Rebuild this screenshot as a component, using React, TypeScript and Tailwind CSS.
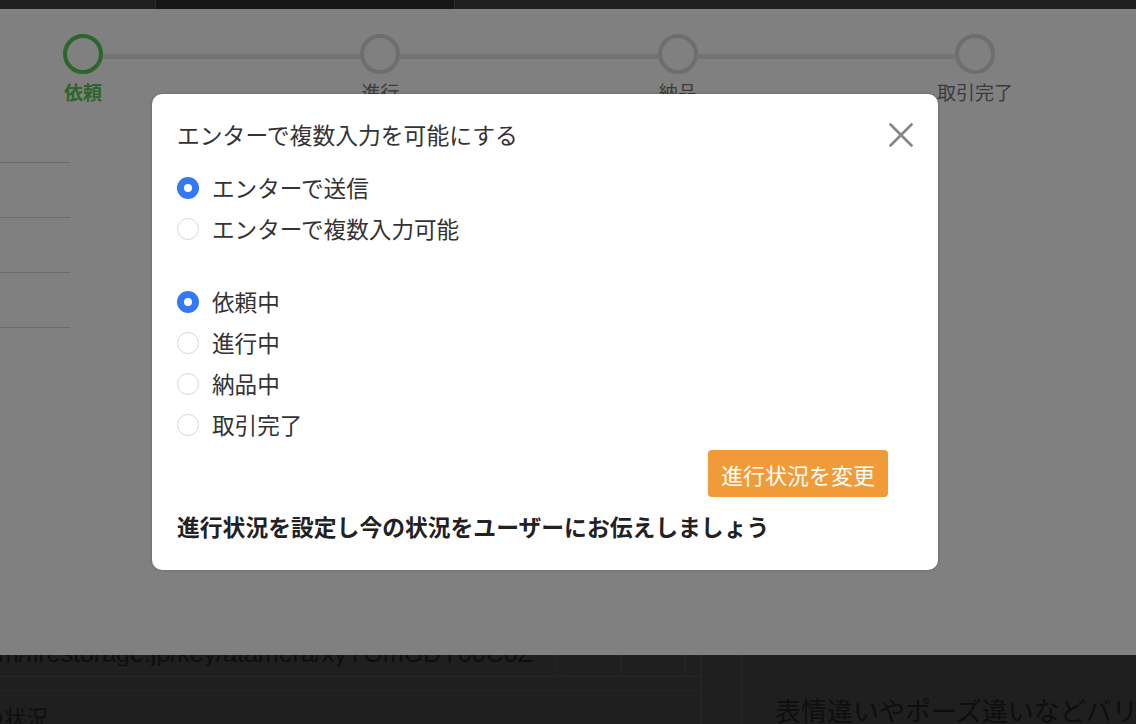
import { useState } from 'react';

const steps = [
  { label: '依頼', active: true },
  { label: '進行', active: false },
  { label: '納品', active: false },
  { label: '取引完了', active: false },
];

const enterOptions = ['エンターで送信', 'エンターで複数入力可能'];
const statusOptions = ['依頼中', '進行中', '納品中', '取引完了'];

function Radio({ checked }: { checked: boolean }) {
  return checked ? (
    <span className="flex items-center justify-center w-[22px] h-[22px] rounded-full bg-[#3478f6] shrink-0">
      <span className="w-[8px] h-[8px] rounded-full bg-white" />
    </span>
  ) : (
    <span className="w-[22px] h-[22px] rounded-full border border-[#d9d9d9] bg-white shrink-0" />
  );
}

function RadioRow({ label, checked, onSelect }: { label: string; checked: boolean; onSelect: () => void }) {
  return (
    <label onClick={onSelect} className="flex items-center h-[41px] cursor-pointer">
      <Radio checked={checked} />
      <span className="ml-[13px] text-[22.6px] leading-[30px] text-[#333333]">{label}</span>
    </label>
  );
}

export default function App() {
  const [enterMode, setEnterMode] = useState(0);
  const [status, setStatus] = useState(0);

  return (
    <div className="relative w-[1136px] h-[724px] overflow-hidden bg-[#1f1f1f] font-['Noto_Sans_CJK_JP',sans-serif]">
      {/* top strip of the page behind */}
      <div className="h-[9px] flex">
        <div className="ml-[155px] w-[300px] h-full bg-[#161616] border-x border-[#2a2a2a]" />
      </div>

      {/* dimmed panel */}
      <div className="relative z-10 h-[646px] bg-[#808080]">
        <div className="ml-[63px] w-[932px] flex items-start pt-[25px]">
          {steps.map((step, i) => (
            <div key={step.label} className="contents">
              {i > 0 && <div className="flex-1 h-[5px] mt-[20px] bg-[#737373]" />}
              <div className="flex flex-col items-center w-[40px] shrink-0">
                <div
                  className={
                    step.active
                      ? 'w-[40px] h-[40px] rounded-full border-[4px] border-[#2b662b]'
                      : 'w-[40px] h-[40px] rounded-full border-[4px] border-[#6e6e6e]'
                  }
                />
                <div
                  className={
                    step.active
                      ? 'mt-[5px] whitespace-nowrap text-[19px] leading-[26px] font-bold text-[#2b662b]'
                      : 'mt-[5px] whitespace-nowrap text-[19px] leading-[26px] text-[#3b3b3b]'
                  }
                >
                  {step.label}
                </div>
              </div>
            </div>
          ))}
        </div>

        {/* list rows behind the modal */}
        <div className="mt-[3px] w-[70px]">
          {[0, 1, 2, 3].map((i) => (
            <div key={i} className="h-[55px] border-b border-[#6c6c6c]" />
          ))}
        </div>
      </div>

      {/* page content below the panel */}
      <div className="flex h-[69px] overflow-hidden text-[#0e0e0e]">
        <div className="w-[702px] shrink-0 border-r border-[#272727]">
          <div className="flex items-end h-[22px] border-b border-[#262626]">
            <div className="-ml-[2px] w-[560px] overflow-hidden whitespace-nowrap font-['Liberation_Sans',sans-serif] text-[25px] leading-[25px] mb-[10px]">
              m/firestorage.jp/key/atamera/xyYOmGDY00C0Z
            </div>
            <div className="-ml-[2px] flex h-[34px] w-[130px] -mb-[1px] rounded-b-lg border border-t-0 border-[#272727]">
              <div className="flex-1 border-r border-[#272727] flex justify-center">
                <div className="w-[10px] h-[10px] border border-[#111111]" />
              </div>
              <div className="flex-1 flex justify-center">
                <div className="w-[10px] h-[8px] bg-[#1a261a]" />
              </div>
            </div>
          </div>
          <div className="h-[14px] border-b border-[#242424]" />
          <div className="-ml-[18px] mt-[12px] text-[22px] leading-[26px]">の状況</div>
        </div>
        <div className="w-[40px] shrink-0 border-r border-[#262626]" />
        <div className="pl-[33px] pt-[38px] whitespace-nowrap text-[26px] leading-[34px]">
          表情違いやポーズ違いなどバリエーション
        </div>
      </div>

      {/* modal */}
      <div className="absolute z-20 left-[152px] top-[94px] w-[786px] rounded-[10px] bg-white shadow-[0_0_3px_rgba(0,0,0,0.25)] px-[25px] pt-[26px] pb-[28px]">
        <div className="flex items-center justify-between h-[30px]">
          <div className="text-[22.8px] leading-[30px] text-[#333333]">エンターで複数入力を可能にする</div>
          <svg width="24" height="24" viewBox="0 0 24 24" className="shrink-0">
            <path d="M1.5 1.5 L22.5 22.5 M22.5 1.5 L1.5 22.5" stroke="#868686" strokeWidth="2.6" strokeLinecap="round" />
          </svg>
        </div>

        <div className="mt-[17px]">
          {enterOptions.map((o, i) => (
            <RadioRow key={o} label={o} checked={enterMode === i} onSelect={() => setEnterMode(i)} />
          ))}
        </div>

        <div className="mt-[32px]">
          {statusOptions.map((o, i) => (
            <RadioRow key={o} label={o} checked={status === i} onSelect={() => setStatus(i)} />
          ))}
        </div>

        <div className="mt-[5px] flex justify-end">
          <button className="mr-[25px] w-[180px] h-[47px] rounded-[4px] bg-[#f19a38] text-white text-[22px] leading-[30px]">
            進行状況を変更
          </button>
        </div>

        <div className="mt-[15px] text-[22.8px] leading-[30px] font-bold text-[#222222]">
          進行状況を設定し今の状況をユーザーにお伝えしましょう
        </div>
      </div>
    </div>
  );
}
